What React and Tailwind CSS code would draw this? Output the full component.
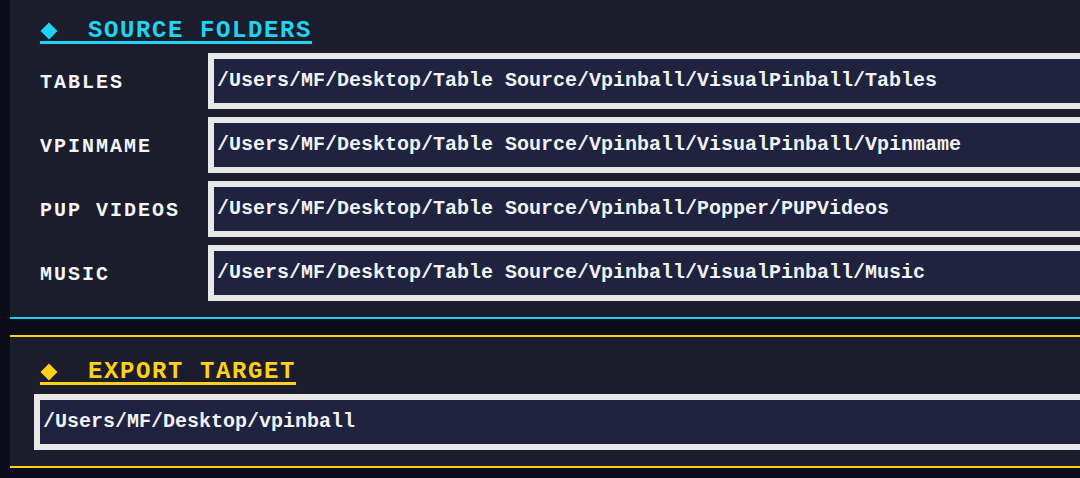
const folders = [
  { label: "TABLES", path: "/Users/MF/Desktop/Table Source/Vpinball/VisualPinball/Tables" },
  { label: "VPINMAME", path: "/Users/MF/Desktop/Table Source/Vpinball/VisualPinball/Vpinmame" },
  { label: "PUP VIDEOS", path: "/Users/MF/Desktop/Table Source/Vpinball/Popper/PUPVideos" },
  { label: "MUSIC", path: "/Users/MF/Desktop/Table Source/Vpinball/VisualPinball/Music" },
];

function Heading({ children, color }) {
  return (
    <h2
      className={`inline-flex items-center border-b-[3px] text-[24px] leading-[20px] font-bold tracking-[1.6px] ${
        color === "cyan" ? "text-[#1fd3f3] border-[#1fd3f3]" : "text-[#ffd11a] border-[#ffd11a]"
      }`}
    >
      <span className="w-[48px] flex items-center">
        <span
          className={`ml-[3px] w-[12px] h-[12px] rotate-45 ${
            color === "cyan" ? "bg-[#1fd3f3]" : "bg-[#ffd11a]"
          }`}
        />
      </span>
      {children}
    </h2>
  );
}

function PathInput({ value }) {
  return (
    <div className="flex-1 h-[56px] border-[6px] border-[#e8e8e8] bg-[#1f2340] flex items-center pl-[3px] -mr-6">
      <span className="text-[20px] leading-[20px] font-bold text-[#f2f2f2] whitespace-pre">{value}</span>
    </div>
  );
}

export default function App() {
  return (
    <div
      className="w-full h-[478px] overflow-hidden bg-[#0b0c17] pl-[10px]"
      style={{ fontFamily: '"Liberation Mono", "DejaVu Sans Mono", monospace' }}
    >
      <section className="bg-[#1b1d2d] border-b-2 border-[#1fd3f3] pl-[30px] pt-[21px] pb-4">
        <Heading color="cyan">SOURCE FOLDERS</Heading>
        <div className="mt-2 flex flex-col gap-2">
          {folders.map((f) => (
            <div key={f.label} className="flex items-center">
              <div className="w-[168px] pt-[4px] text-[20px] leading-[20px] font-bold tracking-[2px] text-[#f5f5f5] whitespace-pre">
                {f.label}
              </div>
              <PathInput value={f.path} />
            </div>
          ))}
        </div>
      </section>

      <section className="mt-4 bg-[#1b1d2d] border-y-2 border-[#ffd11a] pl-[24px] pt-[25px] pb-4">
        <div className="pl-[6px]">
          <Heading color="yellow">EXPORT TARGET</Heading>
        </div>
        <div className="mt-2 flex">
          <PathInput value="/Users/MF/Desktop/vpinball" />
        </div>
      </section>
    </div>
  );
}
